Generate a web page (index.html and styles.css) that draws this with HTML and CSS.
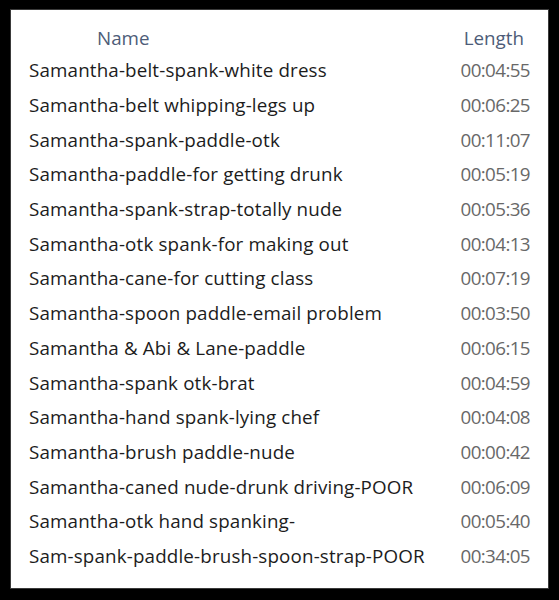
FILE: index.html
```html
<!DOCTYPE html>
<html>
<head>
<meta charset="utf-8">
<link rel="stylesheet" href="styles.css">
</head>
<body>
<div class="panel">
  <div class="row head"><span class="name">Name</span><span class="len">Length</span></div>
  <div class="row"><span class="name">Samantha-belt-spank-white dress</span><span class="len">00:04:55</span></div>
  <div class="row"><span class="name">Samantha-belt whipping-legs up</span><span class="len">00:06:25</span></div>
  <div class="row"><span class="name">Samantha-spank-paddle-otk</span><span class="len">00:11:07</span></div>
  <div class="row"><span class="name">Samantha-paddle-for getting drunk</span><span class="len">00:05:19</span></div>
  <div class="row"><span class="name">Samantha-spank-strap-totally nude</span><span class="len">00:05:36</span></div>
  <div class="row"><span class="name">Samantha-otk spank-for making out</span><span class="len">00:04:13</span></div>
  <div class="row"><span class="name">Samantha-cane-for cutting class</span><span class="len">00:07:19</span></div>
  <div class="row"><span class="name">Samantha-spoon paddle-email problem</span><span class="len">00:03:50</span></div>
  <div class="row"><span class="name">Samantha &amp; Abi &amp; Lane-paddle</span><span class="len">00:06:15</span></div>
  <div class="row"><span class="name">Samantha-spank otk-brat</span><span class="len">00:04:59</span></div>
  <div class="row"><span class="name">Samantha-hand spank-lying chef</span><span class="len">00:04:08</span></div>
  <div class="row"><span class="name">Samantha-brush paddle-nude</span><span class="len">00:00:42</span></div>
  <div class="row"><span class="name">Samantha-caned nude-drunk driving-POOR</span><span class="len">00:06:09</span></div>
  <div class="row"><span class="name">Samantha-otk hand spanking-</span><span class="len">00:05:40</span></div>
  <div class="row"><span class="name">Sam-spank-paddle-brush-spoon-strap-POOR</span><span class="len">00:34:05</span></div>
</div>
</body>
</html>
```
FILE: styles.css
```css
html, body {
  margin: 0;
  padding: 0;
  background: #000;
}
body {
  padding: 10px 11px 12px 11px;
  font-family: "Open Sans", "Noto Sans", sans-serif;
}
.panel {
  background: #fff;
  width: 537px;
  height: 578px;
  box-sizing: border-box;
  padding: 14px 18px 0 18px;
  display: flex;
  flex-direction: column;
  box-shadow: 0 0 0 1px #3a3a3a;
}
.row {
  display: flex;
  justify-content: space-between;
  align-items: center;
  height: 34.7px;
  font-size: 18.8px;
  color: #1c1c1c;
}
.row .name {
  white-space: nowrap;
  letter-spacing: 0.15px;
}
.row .len {
  color: #686868;
  letter-spacing: -0.6px;
}
.head {
  height: 28px;
  margin-bottom: 1px;
}
.head .name {
  margin-left: 68px;
  color: #4d5c78;
  letter-spacing: 0;
}
.head .len {
  margin-right: 6px;
  color: #4d5c78;
  letter-spacing: 0;
}
```
